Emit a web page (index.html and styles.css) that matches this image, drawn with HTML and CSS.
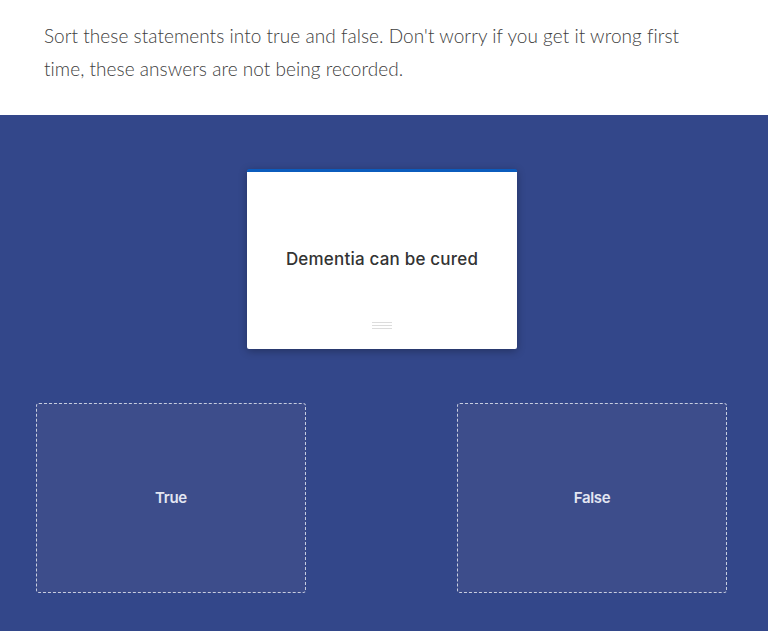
FILE: index.html
```html
<!DOCTYPE html>
<html lang="en">
<head>
<meta charset="utf-8">
<title>Sort statements</title>
<link rel="stylesheet" href="styles.css">
</head>
<body>
<div class="intro">
  <p>Sort these statements into true and false. Don't worry if you get it wrong first time, these answers are not being recorded.</p>
</div>
<div class="stage">
  <div class="deck">
    <div class="card">
      <div class="card-text">Dementia can be cured</div>
      <div class="handle"><span></span><span></span><span></span></div>
    </div>
  </div>
  <div class="zones">
    <div class="zone"><span>True</span></div>
    <div class="zone"><span>False</span></div>
  </div>
</div>
</body>
</html>
```
FILE: styles.css
```css
html, body {
  margin: 0;
  padding: 0;
}
body {
  width: 768px;
  height: 631px;
  overflow: hidden;
  background: #ffffff;
}
.intro {
  height: 115px;
  box-sizing: border-box;
  padding: 19px 44px 0 44px;
}
.intro p {
  margin: 0;
  max-width: 650px;
  font-family: "Lato", "Open Sans", sans-serif;
  font-weight: 300;
  font-size: 19px;
  line-height: 33px;
  letter-spacing: 0.05px;
  font-variant-ligatures: none;
  color: #404040;
}
.stage {
  background: #33478a;
  height: 516px;
  box-sizing: border-box;
  padding-top: 54px;
}
.deck {
  display: flex;
  justify-content: center;
  padding-right: 4px;
}
.card {
  width: 270px;
  height: 180px;
  box-sizing: border-box;
  background: #ffffff;
  border-top: 3px solid #0b5cbd;
  border-radius: 2px;
  box-shadow: 0 2px 8px rgba(0, 0, 0, 0.3);
  position: relative;
  display: flex;
  align-items: center;
  justify-content: center;
}
.card-text {
  font-family: "Inter", "Open Sans", sans-serif;
  font-weight: 500;
  font-size: 17px;
  letter-spacing: 0.2px;
  color: #333333;
  margin-top: -3px;
}
.handle {
  position: absolute;
  left: 50%;
  bottom: 20px;
  width: 20px;
  margin-left: -10px;
  display: flex;
  flex-direction: column;
  gap: 2px;
}
.handle span {
  display: block;
  height: 1px;
  background: #dcdcdc;
}
.zones {
  display: flex;
  justify-content: space-between;
  padding: 54px 41px 0 36px;
}
.zone {
  width: 270px;
  height: 190px;
  box-sizing: border-box;
  border: 1px dashed #c7cde0;
  border-radius: 3px;
  background: #3d4d8b;
  display: flex;
  align-items: center;
  justify-content: center;
}
.zone span {
  font-family: "Inter", "Open Sans", sans-serif;
  font-weight: 600;
  font-size: 15px;
  color: #e3e6f2;
  letter-spacing: -0.3px;
  margin-top: -2px;
}
```
